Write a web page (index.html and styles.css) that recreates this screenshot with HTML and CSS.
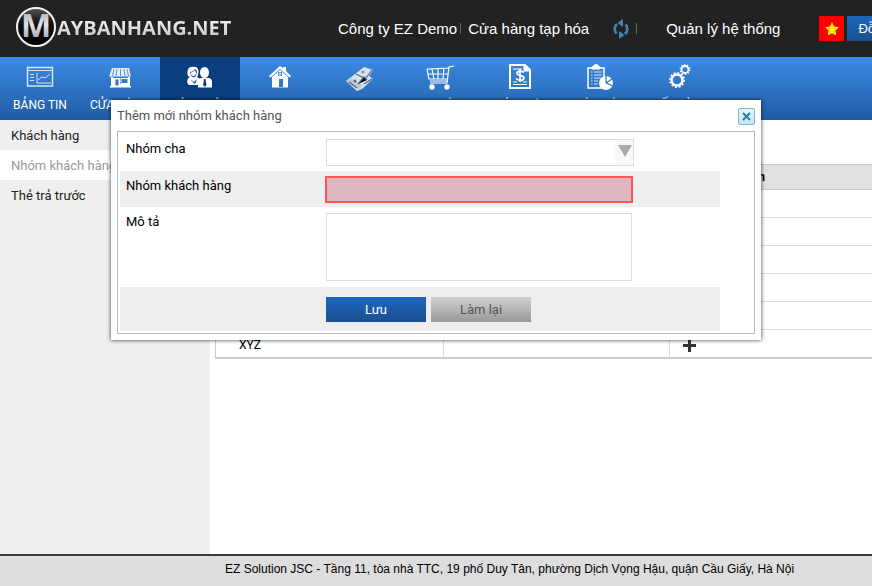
FILE: index.html
```html
<!DOCTYPE html>
<html lang="vi">
<head>
<meta charset="utf-8">
<title>Maybanhang.net</title>
<link rel="stylesheet" href="styles.css">
</head>
<body>
<header class="top">
  <a class="logo" href="#">
    <svg class="logo-mark" viewBox="0 0 42 42" aria-hidden="true">
      <defs>
        <linearGradient id="silver" x1="0" y1="0" x2="0" y2="1"><stop offset="0" stop-color="#8c8d92"/><stop offset=".5" stop-color="#e4e5e8"/><stop offset="1" stop-color="#8a8b90"/></linearGradient>
        <linearGradient id="disc" x1="0" y1="0" x2="0" y2="1"><stop offset="0" stop-color="#555"/><stop offset=".4" stop-color="#111"/><stop offset="1" stop-color="#000"/></linearGradient>
      </defs>
      <circle cx="21" cy="20" r="19" fill="url(#disc)" stroke="#f2f2f2" stroke-width="2"/>
      <text x="21" y="30" text-anchor="middle" class="logo-m" fill="url(#silver)">M</text>
    </svg>
    <span class="logo-text">AYBANHANG.NET</span>
  </a>
  <a class="top-link" href="#">Công ty EZ Demo</a>
  <span class="bar"></span>
  <a class="top-link" href="#">Cửa hàng tạp hóa</a>
  <button class="refresh" type="button" aria-label="Làm mới">
    <svg width="16" height="20" viewBox="0 0 16 20"><path d="M3.500 14.500A6.500 6.500 0 0 1 4 5M12.500 5.500A6.500 6.500 0 0 1 12 15" fill="none" stroke="#4682b4" stroke-width="2.600"/><path d="M10 0v8L4.500 4zM6 12v8l5.500-4z" fill="#4682b4" transform="matrix(1 0 0 1 0 0)"/></svg>
  </button>
  <span class="bar"></span>
  <a class="top-link system" href="#">Quản lý hệ thống</a>
  <button class="flag" type="button" aria-label="Tiếng Việt">
    <svg width="14" height="14" viewBox="0 0 14 14"><path d="M7 0l2.100 4.600 4.900.6-3.600 3.400 1 5L7 11.200l-4.400 2.400 1-5L0 5.200l4.900-.6z" fill="#ffef00"/></svg>
  </button>
  <button class="user" type="button">Đỗ Minh</button>
</header>

<nav class="menu">
  <a href="#"><svg viewBox="0 0 28 26" fill="none" stroke="#d3e6fa"><rect x="1.500" y="3.500" width="25" height="18.500" stroke-width="1.500"/><path d="M1 6.500h26M4 10.500h4M4 13.500h4M4 16.500h4M11 9v10h14M12 16l4-3 3 1 5-4"/></svg><span>BẢNG TIN</span></a>
  <a href="#"><svg viewBox="0 0 28 26"><path d="M6 4h17l2 8.500H3z" fill="#e4effb"/><path d="M8 5l-1.500 7M11 5l-1 7M14.500 5v7M18 5l1 7M21 5l1.500 7" stroke="#3576c4" stroke-width=".8"/><path d="M5 13h2v9H5zM22 13h2v9h-2zM7 14h7v8H7zM14 20h8v2h-8zM4 22h21v1.500H4z" fill="#fff"/><path d="M9.500 15.500h3v6h-3z" fill="#3576c4"/><path d="M15 14.500h7v5h-7z" fill="none" stroke="#fff"/></svg><span>CỬA HÀNG</span></a>
  <a href="#" class="current"><svg viewBox="0 0 28 26" fill="#fff"><path d="M2 12C0 5 4 2 7.500 3c4-1 6 3 4.500 8l-1 2c4 1 4 8 0 8H3c-3-2-2-7 1-8z"/><path d="M4 8c2 0 4-1 5-3 1 1 2 2 2 3-1 7-6 7-7 0" fill="#0a3f7f"/><path d="M4.500 8.500c2 0 3-1 4.300-2.200l1.500 2.200c-1 5-5 5-5.800 0z"/><path d="M4 15l4 3 3-3-2 5z" fill="#0a3f7f"/><ellipse cx="18.500" cy="8.500" rx="4.500" ry="5.500"/><path d="M15.500 14h6c4 0 4.500 2 4.500 5v4.500H12V18c0-3 1-4 3.500-4z"/><path d="M18 15h1.500l1 6-1.700 2-1.700-2z" fill="#0a3f7f"/></svg><span>KHÁCH HÀNG</span></a>
  <a href="#"><svg viewBox="0 0 28 26"><path d="M14 2l3 2.500V3h3v4l5 5-1.500 1.500L14 5l-9.500 8.500L3 12z" fill="#fff"/><path d="M6 13l8-7 8 7v10.500H6z" fill="#fff"/><path d="M12 8h4v4h-4zM13 15h4v8h-4z" fill="#3678c8"/><path d="M14 8v4M12 10h4" stroke="#fff" stroke-width=".8"/></svg><span>KHO</span></a>
  <a href="#"><svg viewBox="0 0 28 26"><path d="M0 17L18 3l9 3-4 6 4 3-11 10-5 2z" fill="#d8e2ec"/><path d="M0 17l5-3 11 7-3 5z" fill="#bdc9d5"/><path d="M10 10l8 4M12 20l6-7 3 3M18 20l8-5M3 18l8 6M26 6l-6 8" stroke="#52677c" stroke-width="1.200"/><circle cx="9" cy="17" r="1.500" fill="#536b84"/><circle cx="17" cy="8" r="1.500" fill="#7d92a8"/></svg><span>THU CHI</span></a>
  <a href="#"><svg viewBox="0 0 28 26" fill="none" stroke="#fff"><path d="M28 2l-5 1-2 16H4M1 5l22-1M1 5l2 10h19M2 10h20M6 5l2 10M12 5v10M18 4l-1 11M4 17h18" stroke-width="1.200"/><circle cx="6" cy="23" r="2.700" fill="#fff" stroke="none"/><circle cx="21" cy="23" r="2.700" fill="#fff" stroke="none"/></svg><span>MUA HÀNG</span></a>
  <a href="#"><svg viewBox="0 0 28 26" fill="none" stroke="#fff"><path d="M4 1h15l5 5v18H4z" stroke-width="2"/><path d="M18 1v6h6z" fill="#fff"/><path d="M7 5h9M7 20.500h14M7 18h4M17 18h4"/><path d="M18 8.500c-1.500-2-7-2-7 .8 0 3 7 1.500 7 4.700 0 3-6 3-8 .5M14 5v13" stroke-width="1.700"/></svg><span>HÓA ĐƠN</span></a>
  <a href="#"><svg viewBox="0 0 28 26" fill="none" stroke="#fff"><path d="M2 4h16v20H2z" stroke-width="1.500"/><path d="M6 3l4-3 4 3v2H6z" fill="#fff"/><path d="M5 8h1.500M8 8h8M5 11h1.500M8 11h8M5 14h1.500M8 14h7M5 17h1.500M8 17h4M5 20h1.500M8 20h4" stroke-opacity=".8"/><circle cx="20" cy="19" r="7" fill="#fff" stroke="none"/><path d="M20 19V12M20 19l6-4M20 19l7 3" stroke="#3270bc" stroke-width="1.200"/></svg><span>BÁO CÁO</span></a>
  <a href="#"><svg viewBox="0 0 28 26" fill="none" stroke="#fff"><circle cx="11" cy="16" r="5.500" stroke-width="2.500"/><circle cx="11" cy="16" r="7.200" stroke-width="1.500" stroke-dasharray="2 1.770"/><circle cx="19" cy="5.500" r="3.500" stroke-width="1.800"/><circle cx="19" cy="5.500" r="4.800" stroke-width="1.200" stroke-dasharray="1.500 1.500"/></svg><span>CẤU HÌNH</span></a>
</nav>

<div class="page">
  <aside class="side">
    <a href="#">Khách hàng</a>
    <a href="#" class="selected">Nhóm khách hàng</a>
    <a href="#">Thẻ trả trước</a>
  </aside>
  <main class="content">
    <table class="groups">
      <thead><tr><th class="name">Nhóm khách hàng</th><th class="note">Mô tả</th><th>Thêm nhóm con</th></tr></thead>
      <tbody>
        <tr><td></td><td></td><td></td></tr>
        <tr><td></td><td></td><td></td></tr>
        <tr><td></td><td></td><td></td></tr>
        <tr><td></td><td></td><td></td></tr>
        <tr><td></td><td></td><td></td></tr>
        <tr><td>XYZ</td><td></td><td><button class="add" type="button" aria-label="Thêm"><svg width="13" height="13" viewBox="0 0 13 13"><path d="M5 0h3v5h5v3H8v5H5V8H0V5h5z" fill="#333"/></svg></button></td></tr>
      </tbody>
    </table>
  </main>
</div>

<footer class="foot">EZ Solution JSC - Tầng 11, tòa nhà TTC, 19 phố Duy Tân, phường Dịch Vọng Hậu, quận Cầu Giấy, Hà Nội</footer>

<section class="dialog" role="dialog" aria-labelledby="dialog-title">
  <div class="dialog-head">
    <h2 id="dialog-title">Thêm mới nhóm khách hàng</h2>
    <button class="close" type="button" aria-label="Đóng"><svg width="9" height="9" viewBox="0 0 9 9"><path d="M1 1l7 7M8 1L1 8" stroke="#2c7da3" stroke-width="2"/></svg></button>
  </div>
  <form class="form">
    <div class="row">
      <label for="parent">Nhóm cha</label>
      <div class="picker"><select id="parent"><option></option></select></div>
    </div>
    <div class="row shade">
      <label for="group">Nhóm khách hàng</label>
      <input id="group" type="text">
    </div>
    <div class="row">
      <label for="desc">Mô tả</label>
      <textarea id="desc"></textarea>
    </div>
    <div class="row shade actions">
      <button class="save" type="button">Lưu</button>
      <button class="reset" type="reset">Làm lại</button>
    </div>
  </form>
</section>
</body>
</html>
```
FILE: styles.css
```css
* { box-sizing: border-box; }

body {
  margin: 0;
  min-height: 100vh;
  display: flex;
  flex-direction: column;
  overflow: hidden;
  position: relative;
  background: #fff;
  color: #000;
  font: 13px/16px Roboto, "Liberation Sans", sans-serif;
}

a { color: inherit; text-decoration: none; }
button { border: 0; padding: 0; font: inherit; cursor: pointer; }

.top {
  display: flex;
  align-items: center;
  height: 57px;
  padding-left: 15px;
  overflow: hidden;
  background: #222;
  color: #fff;
  font: 15px/20px "Liberation Sans", Arial, sans-serif;
  white-space: nowrap;
}

.logo { display: flex; align-items: center; flex: none; width: 323px; padding-bottom: 2px; }
.logo-mark { width: 42px; height: 42px; flex: none; }
.logo-m { font: bold 32px "Open Sans", sans-serif; }
.logo-text {
  font: bold 20px/28px "Open Sans", sans-serif;
  background: linear-gradient(#fff, #bbb);
  background-clip: text;
  color: transparent;
}

.bar { flex: none; width: 1px; height: 11px; margin: 0 7px 0 3px; background: #4f7455; }
.refresh { flex: none; height: 20px; margin: 0 4px 0 24px; background: none; }
.refresh svg { display: block; }
.system { margin-left: 22px; }
.flag {
  display: grid;
  place-items: center;
  flex: none;
  width: 25px;
  height: 25px;
  margin: 0 3px 0 39px;
  background: #f00;
}
.user {
  flex: none;
  height: 25px;
  padding: 0 11px;
  background: linear-gradient(#1c66bd, #1b508f);
  color: #fff;
  font-size: 13px;
}

.menu {
  display: flex;
  height: 63px;
  overflow: hidden;
  background: linear-gradient(#3d8be3, #1f5ba5);
  color: #fff;
}
.menu a {
  display: flex;
  flex-direction: column;
  align-items: center;
  flex: none;
  width: 80px;
  padding-top: 7px;
  font-size: 12px;
  white-space: nowrap;
}
.menu svg { width: 28px; height: 26px; margin-bottom: 7px; overflow: visible; }
.menu .current { background: #0a3f7f; }

.page { display: flex; flex: 1; }

.side { flex: none; width: 210px; background: #efefef; }
.side a { display: block; padding: 8px 11px 6px; color: #222; }
.side .selected { background: #fff; color: #999; }

.content { flex: 1; min-width: 0; padding: 44px 0 0 5px; overflow: hidden; }

.groups {
  width: 100%;
  table-layout: fixed;
  border-collapse: collapse;
  border: 1px solid #ccc;
  border-right: 0;
  border-bottom: 2px solid #ccc;
  font-size: 12px;
}
.groups th {
  height: 25px;
  padding: 0 8px;
  background: #e1e1e1;
  border-bottom: 1px solid #ccc;
  text-align: left;
  white-space: nowrap;
}
.groups td { height: 28px; padding: 4px 23px 0; border-bottom: 1px solid #ddd; }
.groups td + td { padding: 4px 13px 0; border-left: 1px solid #ddd; }
.groups .name { width: 228px; }
.groups .note { width: 226px; }
.add { display: block; background: none; }
.add svg { display: block; }

.foot {
  height: 32px;
  padding: 5px 0 0 225px;
  background: #ddd;
  border-top: 2px solid #3b3b3b;
  font: 12px/16px "Liberation Sans", Arial, sans-serif;
  white-space: nowrap;
}

.dialog {
  position: absolute;
  top: 100px;
  left: 111px;
  width: 650px;
  padding: 6px;
  background: #fff;
  box-shadow: 0 0 4px rgba(0, 0, 0, .8);
}
.dialog-head { display: flex; justify-content: space-between; height: 25px; }
.dialog-head h2 { margin: 2px 0 0; color: #555; font: inherit; }
.close {
  display: grid;
  place-items: center;
  width: 17px;
  height: 17px;
  margin-top: 2px;
  border: 1px solid #7fb5d0;
  border-radius: 2px;
  background: linear-gradient(#e4f5fc, #c4e6f5);
}

.form { padding: 2px; border: 1px solid #bbb; }
.row { display: flex; align-items: flex-start; width: 600px; padding: 5px 0; }
.row label { flex: none; width: 206px; padding: 2px 6px; }
.shade { padding-bottom: 4px; background: #eee; }
.row input { margin-left: -1px; }

.picker, .row input {
  width: 308px;
  height: 27px;
}
.picker {
  display: flex;
  border: 1px solid #ddd;
  background: linear-gradient(90deg, #fff 288px, #f9f9f9 288px);
  position: relative;
}
.picker::after {
  content: "";
  position: absolute;
  top: 5px;
  right: 1px;
  border: 7px solid transparent;
  border-top: 12px solid #aaa;
  border-bottom: 0;
  pointer-events: none;
}
.picker select { flex: 1; border: 0; background: none; appearance: none; font: inherit; }
.row input { border: 2px solid #f55; background: #deb8be; }
.row textarea {
  width: 306px;
  height: 68px;
  margin: 1px 0;
  border: 1px solid #ddd;
  resize: none;
  font: inherit;
}
.actions { gap: 5px; padding: 10px 0 9px 206px; }
.actions button { width: 100px; height: 25px; }
.save { background: linear-gradient(#1c66bd, #1b508f); color: #fff; }
.reset { background: linear-gradient(#d0d0d0, #999); color: #555; }
```
